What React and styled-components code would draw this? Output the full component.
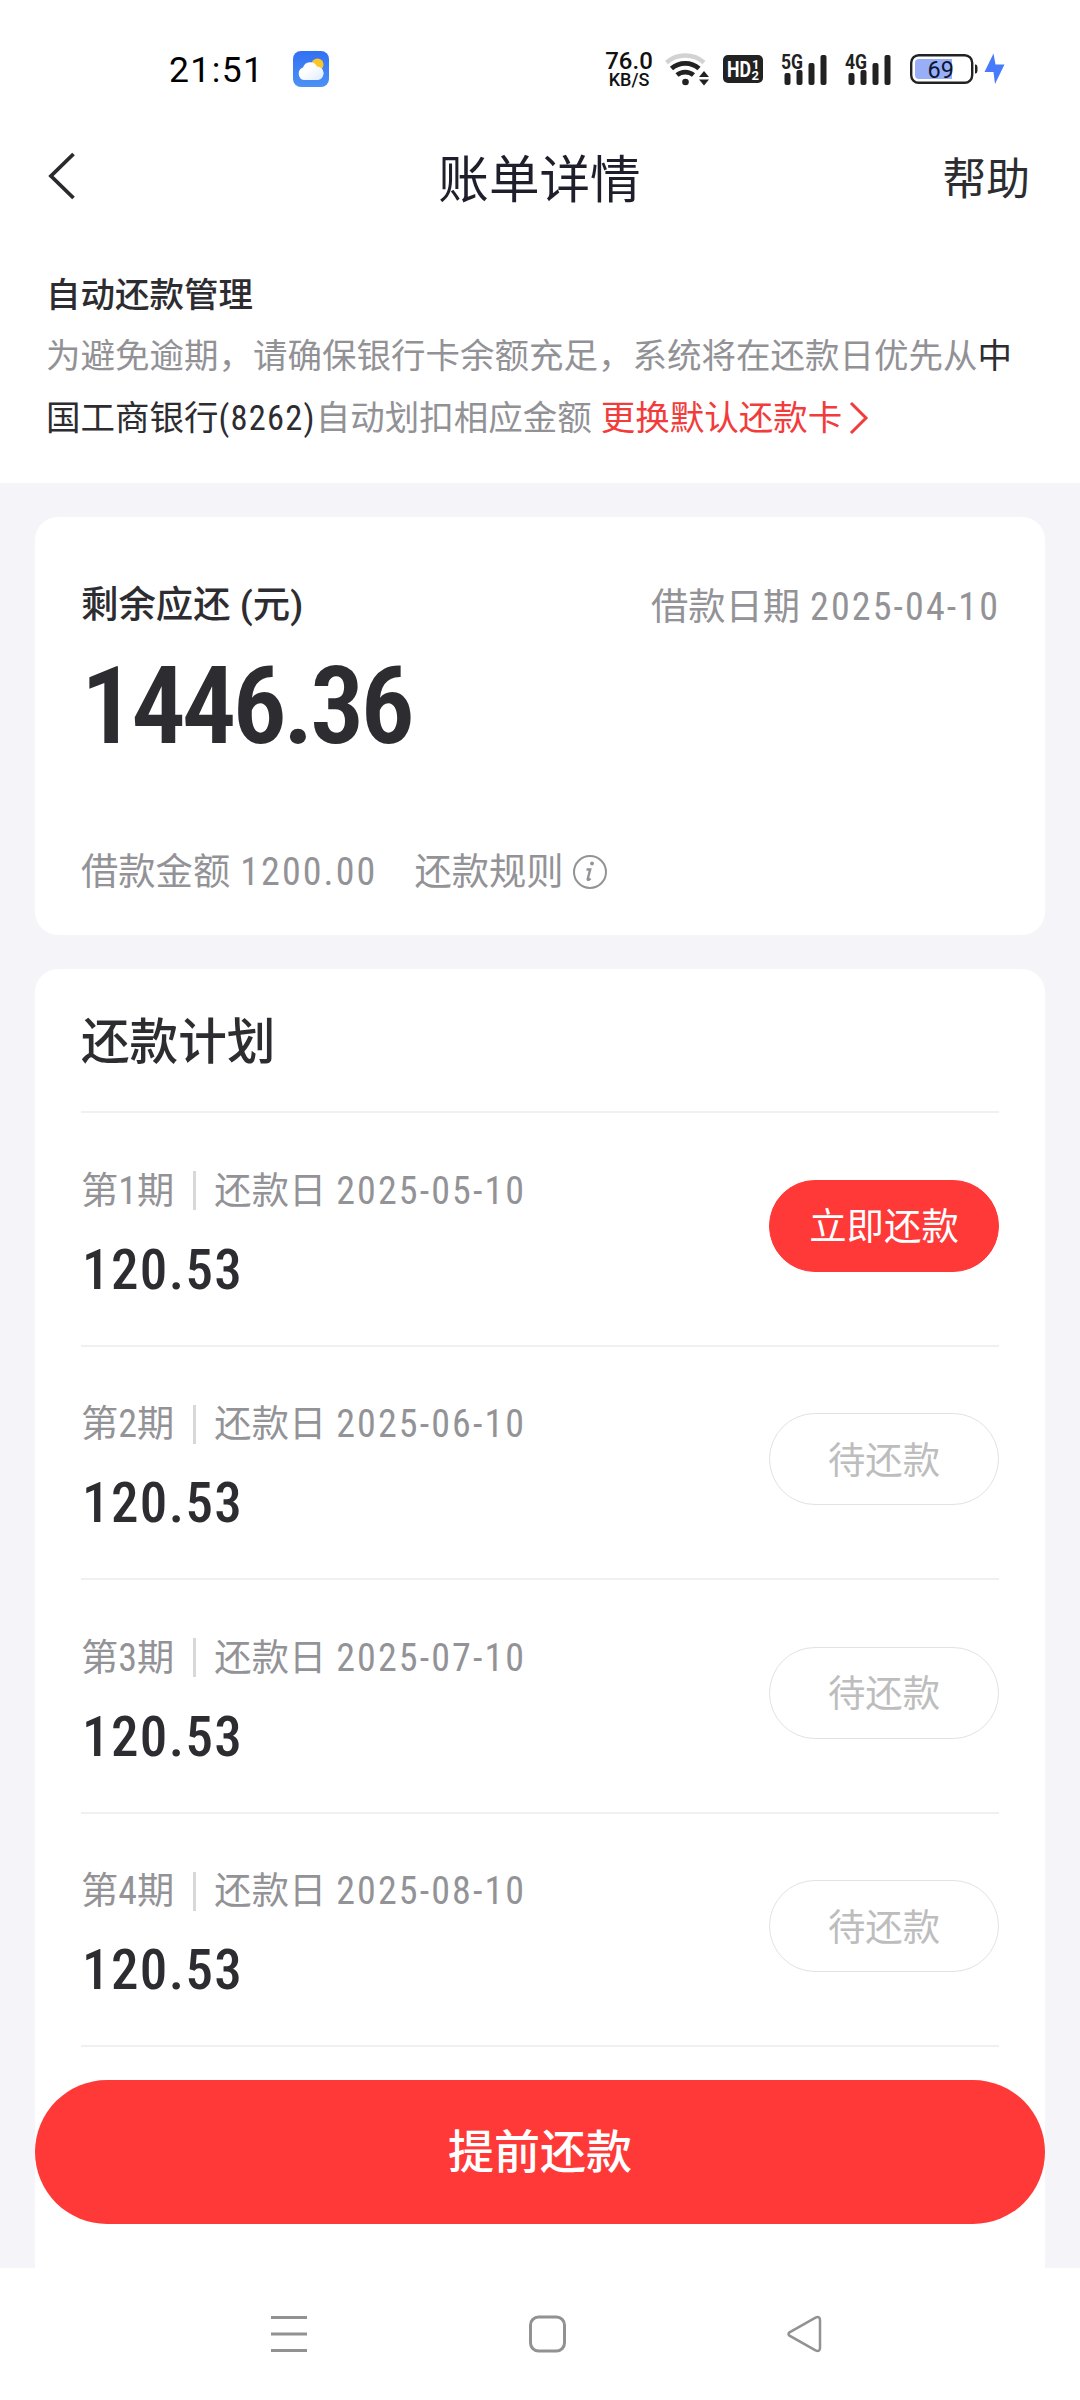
import React from 'react';
import styled, { createGlobalStyle } from 'styled-components';

const GlobalStyle = createGlobalStyle`
  * {
    box-sizing: border-box;
  }
  body {
    margin: 0;
    background-color: #ffffff;
    font-family: Roboto, 'Noto Sans CJK SC', sans-serif;
  }
`;

const Screen = styled.div`
  width: 1080px;
  height: 2400px;
  display: flex;
  flex-direction: column;
  overflow: hidden;
  background-color: #ffffff;
  color: #2d2d31;
`;

const StatusBar = styled.div`
  height: 130px;
  padding: 8px 75px 0 169px;
  display: flex;
  align-items: center;
  flex-shrink: 0;
`;

const Clock = styled.div`
  width: 124px;
  padding-top: 2px;
  font-size: 35.5px;
  line-height: 40px;
  letter-spacing: 1.4px;
  color: #000000;
`;

const StatusIcons = styled.div`
  margin-left: auto;
  display: flex;
  align-items: center;
`;

const NetSpeed = styled.div`
  width: 50px;
  margin-right: 11px;
  padding-top: 2px;
  text-align: center;
  font-weight: 500;
  color: #111111;
`;

const SpeedValue = styled.div`
  font-size: 24px;
  line-height: 19px;
`;

const SpeedUnit = styled.div`
  font-size: 18px;
  line-height: 17px;
`;

const IconSlot = styled.div`
  display: flex;
  margin-right: ${(props) => props.$gap || 0}px;

  svg {
    overflow: visible;
  }
`;

const NavBar = styled.div`
  height: 92px;
  padding: 0 50px 0 47px;
  display: grid;
  grid-template-columns: 1fr auto 1fr;
  align-items: center;
  flex-shrink: 0;
`;

const PageTitle = styled.div`
  padding: 9px 0 0 2px;
  font-size: 50.6px;
  line-height: 72px;
  color: #1f1f2c;
`;

const Help = styled.div`
  padding-top: 7px;
  justify-self: end;
  font-size: 43.8px;
  line-height: 60px;
`;

const Notice = styled.div`
  height: 261px;
  padding: 43px 46px 0;
  flex-shrink: 0;
`;

const NoticeTitle = styled.div`
  font-size: 34.5px;
  font-weight: 500;
  line-height: 60px;
`;

const NoticeText = styled.div`
  font-size: 34.5px;
  line-height: 62px;
  color: #929296;
`;

const BankName = styled.span`
  color: #2d2d31;
`;

const CardNo = styled.span`
  font-stretch: 75%;
  letter-spacing: 1.2px;
`;

const ChangeCard = styled.span`
  margin-left: 9px;
  color: #f23c3c;

  svg {
    vertical-align: -5px;
  }
`;

const Content = styled.div`
  position: relative;
  height: 1785px;
  padding: 34px 35px 0;
  display: flex;
  flex-direction: column;
  gap: 34px;
  flex-shrink: 0;
  overflow: hidden;
  background-color: #f4f4f9;
`;

const Card = styled.div`
  padding: 0 46px;
  border-radius: 23px;
  background-color: #ffffff;
`;

const SummaryCard = styled(Card)`
  height: 418px;
  padding-top: 60px;
  flex-shrink: 0;
`;

const PlanCard = styled(Card)`
  flex: 1;
  border-radius: 23px 23px 0 0;
`;

const SummaryTop = styled.div`
  height: 56px;
  display: flex;
  justify-content: space-between;
  line-height: 56px;
  font-size: 37.4px;
`;

const RemainLabel = styled.div`
  font-weight: 500;
`;

const Muted = styled.div`
  display: flex;
  align-items: center;
  font-size: 37.3px;
  line-height: 56px;
  color: #939397;
`;

const LoanDate = styled(Muted)`
  padding-top: 3px;
  margin-right: -1px;
`;

const Digits = styled.span`
  margin-left: ${(props) => (props.$inline ? 0 : 10)}px;
  font-size: 38px;
  font-weight: 400;
  font-stretch: 75%;
  letter-spacing: ${(props) => (props.$inline ? 0 : 2.1)}px;
`;

const RemainAmount = styled.div`
  height: 146px;
  font-size: 108px;
  font-weight: 600;
  font-stretch: 75%;
  letter-spacing: -3.8px;
  line-height: 146px;
`;

const SummaryBottom = styled.div`
  margin-top: 65px;
  display: flex;
  gap: 37px;

  svg {
    margin-left: 9px;
  }
`;

const PlanTitle = styled.div`
  height: 142px;
  padding-top: 3px;
  font-size: 48.6px;
  font-weight: 500;
  line-height: 142px;
`;

const PlanRow = styled.div`
  height: 233.5px;
  padding-bottom: 6px;
  display: flex;
  align-items: center;
  justify-content: space-between;
  border-top: 2px solid #f0f0f1;
`;

const PlanInfo = styled.div`
  padding-top: 20px;
  display: flex;
  flex-direction: column;
`;

const Separator = styled.span`
  width: 3px;
  height: 39px;
  margin: 0 18px 0 19px;
  background-color: #d8d8da;
`;

const PlanAmount = styled.div`
  height: 78px;
  padding-left: 1px;
  margin-top: 12px;
  font-size: 55px;
  font-weight: 500;
  font-stretch: 75%;
  letter-spacing: 1.4px;
  line-height: 78px;
`;

const PayButton = styled.button`
  width: 230px;
  height: 92px;
  padding: 0 0 3px;
  border: 1px solid ${(props) => (props.$due ? '#ff3838' : '#e2e2e2')};
  border-radius: 46px;
  background-color: ${(props) => (props.$due ? '#ff3838' : '#ffffff')};
  color: ${(props) => (props.$due ? '#ffffff' : '#bdbdbd')};
  font-family: inherit;
  font-size: 37.4px;
`;

const ListEnd = styled.div`
  border-top: 2px solid #f0f0f1;
`;

const PrepayButton = styled.button`
  position: absolute;
  left: 35px;
  right: 35px;
  bottom: 44px;
  height: 144px;
  padding: 0 0 9px;
  border: none;
  border-radius: 72px;
  background-color: #ff3838;
  color: #ffffff;
  font-family: inherit;
  font-size: 46px;
  font-weight: 500;
`;

const SystemNav = styled.div`
  height: 132px;
  padding: 0 258px 0 271px;
  display: flex;
  align-items: center;
  justify-content: space-between;
  flex-shrink: 0;
`;

const plans = [
  { term: 1, date: '2025-05-10', amount: '120.53', due: true },
  { term: 2, date: '2025-06-10', amount: '120.53', due: false },
  { term: 3, date: '2025-07-10', amount: '120.53', due: false },
  { term: 4, date: '2025-08-10', amount: '120.53', due: false },
];

function WeatherIcon() {
  return (
    <svg width="36" height="36" viewBox="0 0 36 36">
      <defs>
        <linearGradient id="sky" x1="0" y1="0" x2="0" y2="1">
          <stop offset="0" stopColor="#3270f3" />
          <stop offset="1" stopColor="#4c92f4" />
        </linearGradient>
        <linearGradient id="cloud" x1="0" y1="0" x2="1" y2="1">
          <stop offset="0.4" stopColor="#ffffff" />
          <stop offset="1" stopColor="#dcebfd" />
        </linearGradient>
      </defs>
      <rect width="36" height="36" rx="8" fill="url(#sky)" />
      <circle cx="24.5" cy="13.5" r="6" fill="#fcc629" />
      <path
        d="M11 29a6.500 6.500 0 0 1-1-12.500 7.500 7.500 0 0 1 14-1 6.800 6.800 0 0 1 1 13.500z"
        fill="url(#cloud)"
      />
    </svg>
  );
}

function WifiIcon() {
  return (
    <svg width="45" height="36" viewBox="0 0 45 36" fill="none">
      <path d="M1.500 11.500a29 29 0 0 1 37.500 0" stroke="#d2d2d2" strokeWidth="4.500" />
      <path d="M6.500 17.500a21 21 0 0 1 27.500 0" stroke="#222222" strokeWidth="4.800" />
      <path d="M12 24a13 13 0 0 1 16.500 0" stroke="#222222" strokeWidth="4.800" />
      <circle cx="20.500" cy="31" r="3.300" fill="#222222" />
      <path d="M34 26l5-6 5 6zM34 28.500l5 6 5-6z" fill="#222222" />
    </svg>
  );
}

function HdIcon() {
  return (
    <svg width="40" height="28" viewBox="0 0 40 28" fill="#ffffff" fontFamily="Roboto" fontWeight="700">
      <rect width="40" height="28" rx="5" fill="#222222" />
      <text x="4" y="22" fontSize="22" textLength="24" lengthAdjust="spacingAndGlyphs">HD</text>
      <text x="29" y="14" fontSize="13">1</text>
      <text x="28.500" y="24.500" fontSize="13">2</text>
    </svg>
  );
}

function SignalIcon({ label }) {
  return (
    <svg width="46" height="34" viewBox="0 0 46 34" fill="#222222">
      <text x="0" y="16.500" fontSize="20" fontFamily="Roboto" fontWeight="700" textLength="22" lengthAdjust="spacingAndGlyphs">
        {label}
      </text>
      <rect x="3.500" y="21" width="6" height="12" rx="2" />
      <rect x="15.500" y="18" width="6" height="15" rx="2" />
      <rect x="27.500" y="11" width="6" height="22" rx="2" />
      <rect x="39.500" y="3" width="6" height="30" rx="2" />
    </svg>
  );
}

function BatteryIcon() {
  return (
    <svg width="68" height="30" viewBox="0 0 68 30">
      <rect x="1.200" y="1.200" width="61" height="27.600" rx="7.500" fill="none" stroke="#222222" strokeWidth="2.400" />
      <path d="M65 10.500c2 0 2.500 1 2.500 4.500s-.5 4.500-2.500 4.500z" fill="#222222" />
      <path d="M9 5h33v20H9a4 4 0 0 1-4-4V9a4 4 0 0 1 4-4z" fill="#98aff8" />
      <text x="17.500" y="24" fontSize="23.500" fontFamily="Roboto" fill="#0c1633">69</text>
    </svg>
  );
}

function App() {
  return (
    <Screen>
      <GlobalStyle />
      <StatusBar>
        <Clock>21:51</Clock>
        <WeatherIcon />
        <StatusIcons>
          <NetSpeed>
            <SpeedValue>76.0</SpeedValue>
            <SpeedUnit>KB/S</SpeedUnit>
          </NetSpeed>
          <IconSlot $gap={13}>
            <WifiIcon />
          </IconSlot>
          <IconSlot $gap={18}>
            <HdIcon />
          </IconSlot>
          <IconSlot $gap={18}>
            <SignalIcon label="5G" />
          </IconSlot>
          <IconSlot $gap={19}>
            <SignalIcon label="4G" />
          </IconSlot>
          <IconSlot $gap={6}>
            <BatteryIcon />
          </IconSlot>
          <svg width="21" height="32" viewBox="0 0 21 32">
            <path d="M9.500 0.500L0.500 19h9l1.500 12L20.500 11.500h-9z" fill="#477bfb" />
          </svg>
        </StatusIcons>
      </StatusBar>

      <NavBar>
        <svg width="30" height="50" viewBox="0 0 30 50" fill="none">
          <path d="M26.500 3L4 25l22.500 22" stroke="#2a2a2e" strokeWidth="3.800" />
        </svg>
        <PageTitle>账单详情</PageTitle>
        <Help>帮助</Help>
      </NavBar>

      <Notice>
        <NoticeTitle>自动还款管理</NoticeTitle>
        <NoticeText>
          为避免逾期，请确保银行卡余额充足，系统将在还款日优先从
          <BankName>
            中国工商银行<CardNo>(8262)</CardNo>
          </BankName>
          自动划扣相应金额
          <ChangeCard>
            更换默认还款卡
            <svg width="28" height="34" viewBox="0 0 28 34" fill="none">
              <path d="M9 2l15 15L9 32" stroke="#f23c3c" strokeWidth="3" />
            </svg>
          </ChangeCard>
        </NoticeText>
      </Notice>

      <Content>
        <SummaryCard>
          <SummaryTop>
            <RemainLabel>剩余应还 (元)</RemainLabel>
            <LoanDate>
              借款日期<Digits>2025-04-10</Digits>
            </LoanDate>
          </SummaryTop>
          <RemainAmount>1446.36</RemainAmount>
          <SummaryBottom>
            <Muted>
              借款金额<Digits>1200.00</Digits>
            </Muted>
            <Muted>
              还款规则
              <svg width="34" height="34" viewBox="0 0 34 34" fill="none">
                <circle cx="17" cy="17" r="16" stroke="#939397" strokeWidth="2" />
                <circle cx="19" cy="8.500" r="1.900" fill="#939397" />
                <path d="M13.500 14.500h3.700l-2.500 9.500c-.3 1.500 1.300 1 2.800-.5" stroke="#939397" strokeWidth="2.400" />
              </svg>
            </Muted>
          </SummaryBottom>
        </SummaryCard>

        <PlanCard>
          <PlanTitle>还款计划</PlanTitle>
          {plans.map((plan) => (
            <PlanRow key={plan.term}>
              <PlanInfo>
                <Muted>
                  第<Digits $inline>{plan.term}</Digits>期
                  <Separator />
                  还款日<Digits>{plan.date}</Digits>
                </Muted>
                <PlanAmount>{plan.amount}</PlanAmount>
              </PlanInfo>
              <PayButton $due={plan.due}>{plan.due ? '立即还款' : '待还款'}</PayButton>
            </PlanRow>
          ))}
          <ListEnd />
        </PlanCard>
        <PrepayButton>提前还款</PrepayButton>
      </Content>

      <SystemNav>
        <svg width="36" height="38" viewBox="0 0 36 38" stroke="#929292" strokeWidth="3">
          <path d="M0 2.500h36M0 19h36M0 35.500h36" />
        </svg>
        <svg width="37" height="38" viewBox="0 0 37 38" fill="none">
          <rect x="1.500" y="2" width="34" height="34" rx="8" stroke="#929292" strokeWidth="3" />
        </svg>
        <svg width="35" height="38" viewBox="0 0 35 38" fill="none">
          <path
            d="M2.500 17.300L28.500 2.600q4.500-1.800 4.500 2.400v28q0 4.200-4.500 2.400L2.500 20.700q-2-1.700 0-3.400z"
            stroke="#929292"
            strokeWidth="2.500"
          />
        </svg>
      </SystemNav>
    </Screen>
  );
}

export default App;
